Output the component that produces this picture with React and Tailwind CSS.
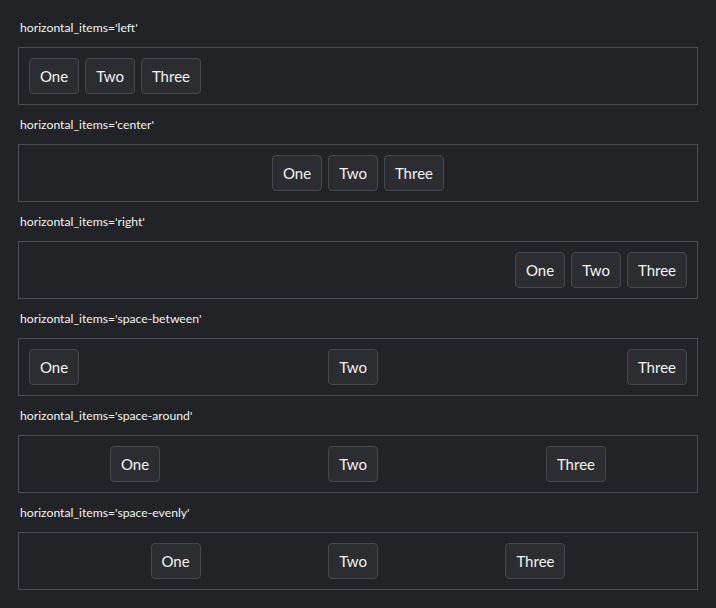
import React from "react";

const ROWS = [
  { mode: "left", justify: "justify-start" },
  { mode: "center", justify: "justify-center" },
  { mode: "right", justify: "justify-end" },
  { mode: "space-between", justify: "justify-between" },
  { mode: "space-around", justify: "justify-around" },
  { mode: "space-evenly", justify: "justify-evenly" },
];

const ITEMS = ["One", "Two", "Three"];

const Btn = ({ label }) => (
  <button className="h-[36px] px-[10px] rounded-[4px] border border-[#45484e] bg-[#2b2d31] text-[15px] leading-[24px] text-[#f1f3f5]">
    {label}
  </button>
);

const App = () => {
  return (
    <div
      className="min-h-[608px] bg-[#212327] px-[18px] pt-[18px] pb-[10px] flex flex-col gap-[10px]"
      style={{ fontFamily: '"Segoe UI", Lato, "Noto Sans", sans-serif' }}
    >
      {ROWS.map((row) => (
        <div key={row.mode} className="flex flex-col gap-[10px]">
          {/* label */}
          <div className="h-[19px] pl-[2px] text-[12.2px] leading-[19px] text-[#f1f3f5]">
            horizontal_items='{row.mode}'
          </div>
          {/* row */}
          <div
            className={`flex ${row.justify} gap-[6px] h-[58px] items-center px-[10px] border border-[#4b4e54]`}
          >
            {ITEMS.map((it) => (
              <Btn key={it} label={it} />
            ))}
          </div>
        </div>
      ))}
    </div>
  );
};

export default App;
